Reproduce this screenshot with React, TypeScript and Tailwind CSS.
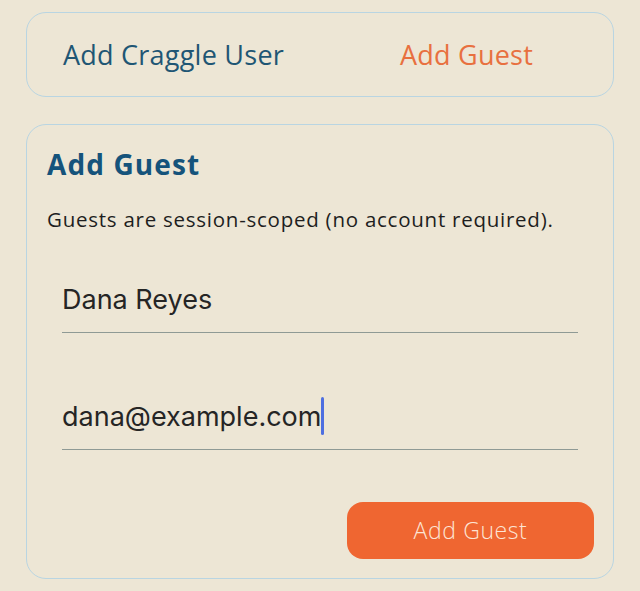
import React from "react";

const display = { fontFamily: '"Open Sans", "Noto Sans", sans-serif' };
const field = { fontFamily: 'Inter, Roboto, "Noto Sans", sans-serif' };

export default function App() {
  return (
    <div className="w-full h-[591px] bg-[#ede6d5] px-[26px] pt-[12px] overflow-hidden" style={display}>
      <div className="h-[85px] rounded-[20px] border border-[#b9d5e2] grid grid-cols-2 items-center">
        <button className="text-[27px] leading-[34px] text-[#1f5674] text-center tracking-[0.25px]">
          Add Craggle User
        </button>
        <button className="text-[27px] leading-[34px] text-[#e8703f] text-center tracking-[0.25px]">
          Add Guest
        </button>
      </div>

      <div className="mt-[27px] rounded-[20px] border border-[#b9d5e2] pt-[22px] pb-[19px]">
        <h2 className="px-[20px] text-[28px] leading-[34px] font-bold text-[#15537b] tracking-[1.1px]">
          Add Guest
        </h2>
        <p className="px-[20px] mt-[25px] text-[20.5px] leading-[27px] text-[#1e1e1e] tracking-[0.75px]">
          Guests are session-scoped (no account required).
        </p>

        <div className="px-[35px]" style={field}>
          <div className="mt-[50px] pb-[16px] border-b-[1.5px] border-[#8f9a95] text-[27px] leading-[33px] text-[#252525]">
            Dana Reyes
          </div>
          <div className="mt-[67px] pb-[16px] border-b-[1.5px] border-[#8f9a95] text-[27px] leading-[33px] text-[#252525]">
            <span className="relative">
              dana@example.com
              <span className="absolute right-[-3px] top-[-3px] w-[3px] h-[38px] bg-[#4e6fe0] rounded-full" />
            </span>
          </div>
        </div>

        <div className="flex justify-end pr-[19px] mt-[52px]">
          <button className="w-[247px] h-[57px] rounded-[16px] bg-[#ef6631] text-[#fde4d4] text-[23px] font-light tracking-[0.6px]" style={display}>
            Add Guest
          </button>
        </div>
      </div>
    </div>
  );
}
